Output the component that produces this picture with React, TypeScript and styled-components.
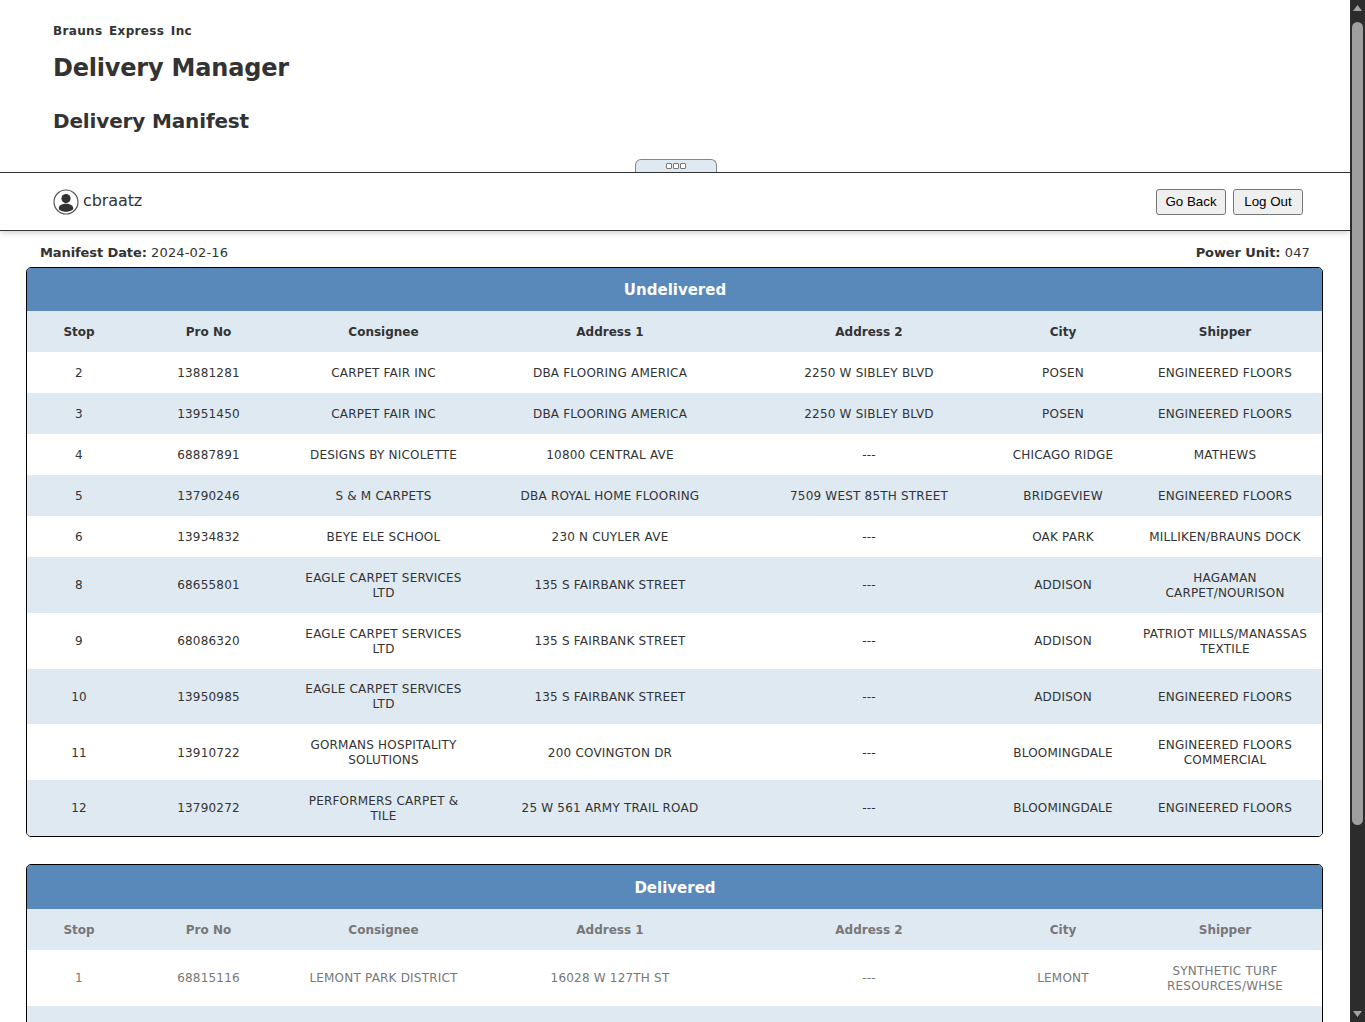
import styled, {createGlobalStyle} from 'styled-components';

const GlobalStyle = createGlobalStyle`
  html, body {
    margin: 0;
    padding: 0;
    height: 100%;
    overflow: hidden;
    background: #fff;
  }
`;

const Viewport = styled.div`
  display: flex;
  height: 1022px;
  overflow: hidden;
  font-family: "DejaVu Sans", Verdana, sans-serif;
  color: #333;
`;

const Page = styled.div`
  flex: 1;
  min-width: 0;
  overflow: hidden;
`;

const Header = styled.header`
  position: relative;
  height: 173px;
  box-sizing: border-box;
  padding: 24px 53px 0;
  border-bottom: 1px solid #333;
`;

const Company = styled.div`
  font-size: 12px;
  font-weight: bold;
  line-height: 15px;
  letter-spacing: 0.35px;
  word-spacing: 2px;
`;

const Title = styled.h1`
  margin: 14px 0 0;
  font-size: 24px;
  line-height: 31px;
  letter-spacing: -0.2px;
  font-weight: bold;
`;

const SubTitle = styled.h2`
  margin: 25px 0 0;
  font-size: 20px;
  line-height: 25px;
  letter-spacing: -0.15px;
  font-weight: bold;
`;

const Handle = styled.div`
  position: absolute;
  left: 635px;
  bottom: 0;
  width: 82px;
  height: 13px;
  box-sizing: border-box;
  display: flex;
  justify-content: center;
  align-items: center;
  gap: 1px;
  padding-bottom: 1px;
  background: #dfe9f2;
  border: 1px solid #888;
  border-bottom: none;
  border-radius: 6px 6px 0 0;
`;

const HandleDot = styled.span`
  width: 4px;
  height: 4px;
  border: 1px solid #777;
  border-radius: 1px;
  background: #fff;
`;

const UserBar = styled.div`
  height: 58px;
  box-sizing: border-box;
  display: flex;
  align-items: center;
  justify-content: space-between;
  padding: 0 47px 0 53px;
  border-bottom: 1px solid #333;
  box-shadow: 0 2px 6px rgba(0, 0, 0, 0.18);
`;

const UserInfo = styled.div`
  display: flex;
  align-items: center;
  gap: 4px;
  font-size: 16px;
`;

const UserName = styled.span`
  margin-bottom: 2px;
  letter-spacing: -0.1px;
`;

const Buttons = styled.div`
  display: flex;
  gap: 7px;
`;

const Button = styled.button`
  width: 70px;
  height: 26px;
  padding: 0;
  font-family: "Liberation Sans", Arial, sans-serif;
  font-size: 13.33px;
  color: #000;
  background: #efefef;
  border: 1px solid #767676;
  border-radius: 3px;
`;

const Content = styled.main`
  padding: 14px 27px 0 26px;
`;

const MetaRow = styled.div`
  display: flex;
  justify-content: space-between;
  padding: 0 13px 7px 14px;
  font-size: 13px;
  line-height: 15px;
  letter-spacing: 0.15px;
  b {
    letter-spacing: -0.1px;
  }
`;

const Card = styled.section<{$faded?: boolean}>`
  margin-bottom: 27px;
  border: 1px solid #000;
  border-radius: 5px;
  overflow: hidden;
  color: ${props => (props.$faded ? '#777' : '#333')};
`;

const Table = styled.table`
  width: 100%;
  border-collapse: collapse;
  table-layout: fixed;
  font-size: 12px;
  line-height: 15px;
  text-align: center;
`;

const Column = styled.col<{$width: number}>`
  width: ${props => props.$width}px;
`;

const Caption = styled.th<{$tall?: boolean}>`
  height: ${props => (props.$tall ? 44 : 43)}px;
  box-sizing: border-box;
  padding: ${props => (props.$tall ? 3 : 2)}px 0 0;
  background: #5988bb;
  color: #fff;
  font-size: 15px;
`;

const HeadCell = styled.th`
  height: 41px;
  padding: 2px 8px 0;
  box-sizing: border-box;
  background: #dfe9f2;
  font-size: 12px;
`;

const Row = styled.tr`
  background: #fff;
  &:nth-child(even) {
    background: #dfe9f2;
  }
`;

const Cell = styled.td`
  height: 41px;
  padding: 13.8px 8px 12px;
  box-sizing: border-box;
  letter-spacing: 0.2px;
`;

const ScrollTrack = styled.div`
  width: 15px;
  flex: none;
  display: flex;
  flex-direction: column;
  align-items: center;
  background: #2c2c2c;
`;

const ScrollArrow = styled.svg`
  flex: none;
  width: 15px;
  height: 17px;
  fill: #a3a3a3;
`;

const ScrollThumb = styled.div`
  width: 11px;
  height: 803px;
  margin-top: 5px;
  border-radius: 6px;
  background: #9f9f9f;
`;

const ScrollSpacer = styled.div`
  flex: 1;
`;

const columns: [string, number][] = [
  ['Stop', 104],
  ['Pro No', 155],
  ['Consignee', 195],
  ['Address 1', 258],
  ['Address 2', 260],
  ['City', 128],
  ['Shipper', 196],
];

const undelivered = [
  ['2', '13881281', 'CARPET FAIR INC', 'DBA FLOORING AMERICA', '2250 W SIBLEY BLVD', 'POSEN', 'ENGINEERED FLOORS'],
  ['3', '13951450', 'CARPET FAIR INC', 'DBA FLOORING AMERICA', '2250 W SIBLEY BLVD', 'POSEN', 'ENGINEERED FLOORS'],
  ['4', '68887891', 'DESIGNS BY NICOLETTE', '10800 CENTRAL AVE', '---', 'CHICAGO RIDGE', 'MATHEWS'],
  ['5', '13790246', 'S & M CARPETS', 'DBA ROYAL HOME FLOORING', '7509 WEST 85TH STREET', 'BRIDGEVIEW', 'ENGINEERED FLOORS'],
  ['6', '13934832', 'BEYE ELE SCHOOL', '230 N CUYLER AVE', '---', 'OAK PARK', 'MILLIKEN/BRAUNS DOCK'],
  ['8', '68655801', 'EAGLE CARPET SERVICES LTD', '135 S FAIRBANK STREET', '---', 'ADDISON', 'HAGAMAN CARPET/NOURISON'],
  ['9', '68086320', 'EAGLE CARPET SERVICES LTD', '135 S FAIRBANK STREET', '---', 'ADDISON', 'PATRIOT MILLS/MANASSAS TEXTILE'],
  ['10', '13950985', 'EAGLE CARPET SERVICES LTD', '135 S FAIRBANK STREET', '---', 'ADDISON', 'ENGINEERED FLOORS'],
  ['11', '13910722', 'GORMANS HOSPITALITY SOLUTIONS', '200 COVINGTON DR', '---', 'BLOOMINGDALE', 'ENGINEERED FLOORS COMMERCIAL'],
  ['12', '13790272', 'PERFORMERS CARPET & TILE', '25 W 561 ARMY TRAIL ROAD', '---', 'BLOOMINGDALE', 'ENGINEERED FLOORS'],
];

const delivered = [
  ['1', '68815116', 'LEMONT PARK DISTRICT', '16028 W 127TH ST', '---', 'LEMONT', 'SYNTHETIC TURF RESOURCES/WHSE'],
  ['7', '13934840', 'BEYE ELE SCHOOL', '230 N CUYLER AVE', '---', 'OAK PARK', 'SHAW/PATCRAFT INDUSTRIES'],
];

function ManifestTable({title, rows, faded}: {title: string; rows: string[][]; faded?: boolean}) {
  return (
    <Card $faded={faded}>
      <Table>
        <colgroup>
          {columns.map(([label, width]) => (
            <Column key={label} $width={width}/>
          ))}
        </colgroup>
        <thead>
          <tr>
            <Caption colSpan={columns.length} $tall={faded}>{title}</Caption>
          </tr>
          <tr>
            {columns.map(([label]) => (
              <HeadCell key={label}>{label}</HeadCell>
            ))}
          </tr>
        </thead>
        <tbody>
          {rows.map(row => (
            <Row key={row[1]}>
              {row.map((value, i) => (
                <Cell key={i}>{value}</Cell>
              ))}
            </Row>
          ))}
        </tbody>
      </Table>
    </Card>
  );
}

function UserIcon() {
  return (
    <svg width="26" height="26" viewBox="0 0 26 26">
      <circle cx="13" cy="13" r="12" fill="#fff" stroke="#555" strokeWidth="1.2"/>
      <circle cx="13" cy="9.6" r="4.6" fill="#333"/>
      <path d="M5.8 19.4c0-3 3.2-4.6 7.2-4.6s7.2 1.6 7.2 4.6c0 .8-.3 1.2-.8 1.6-1.8 1.2-4 1.8-6.4 1.8s-4.6-.6-6.4-1.8c-.5-.4-.8-.8-.8-1.6z" fill="#333"/>
    </svg>
  );
}

export default function App() {
  return (
    <Viewport>
      <GlobalStyle/>
      <Page>
        <Header>
          <Company>Brauns Express Inc</Company>
          <Title>Delivery Manager</Title>
          <SubTitle>Delivery Manifest</SubTitle>
          <Handle>
            <HandleDot/>
            <HandleDot/>
            <HandleDot/>
          </Handle>
        </Header>
        <UserBar>
          <UserInfo>
            <UserIcon/>
            <UserName>cbraatz</UserName>
          </UserInfo>
          <Buttons>
            <Button>Go Back</Button>
            <Button>Log Out</Button>
          </Buttons>
        </UserBar>
        <Content>
          <MetaRow>
            <span><b>Manifest Date:</b> 2024-02-16</span>
            <span><b>Power Unit:</b> 047</span>
          </MetaRow>
          <ManifestTable title="Undelivered" rows={undelivered}/>
          <ManifestTable title="Delivered" rows={delivered} faded/>
        </Content>
      </Page>
      <ScrollTrack>
        <ScrollArrow viewBox="0 0 15 17">
          <path d="M7.5 5l4.5 6H3z"/>
        </ScrollArrow>
        <ScrollThumb/>
        <ScrollSpacer/>
        <ScrollArrow viewBox="0 0 15 17">
          <path d="M3 6h9l-4.5 6z"/>
        </ScrollArrow>
      </ScrollTrack>
    </Viewport>
  );
}
